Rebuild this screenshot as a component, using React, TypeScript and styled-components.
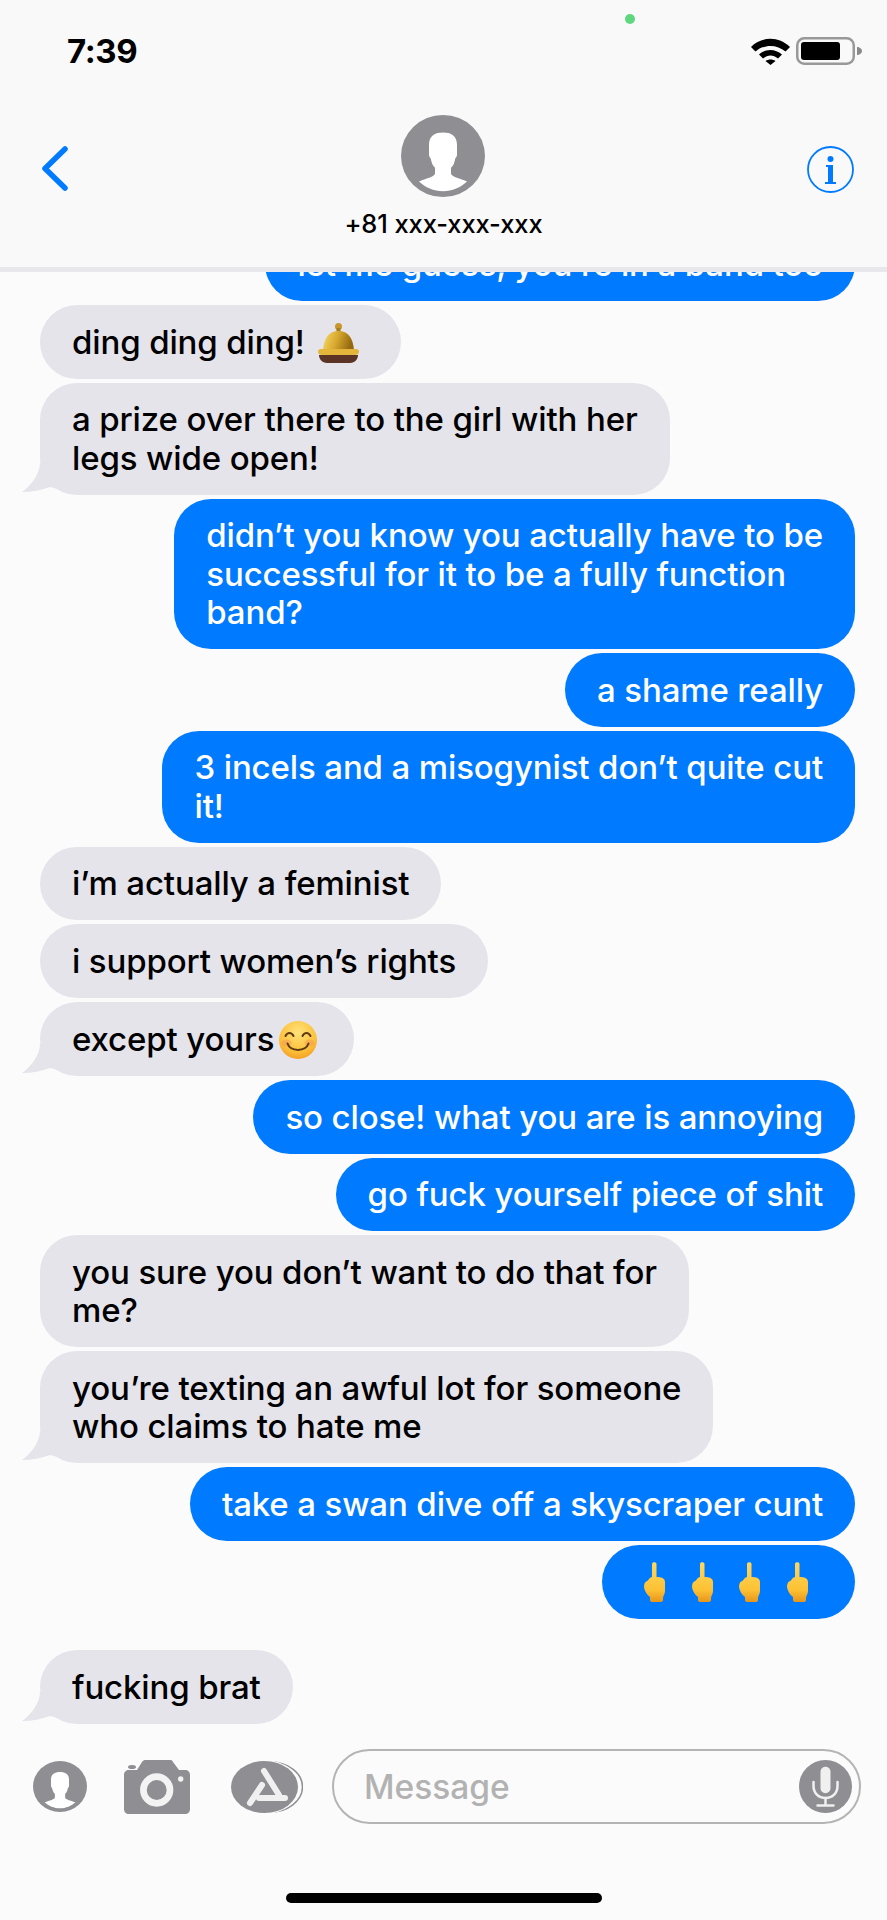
import React from "react";
import styled, { createGlobalStyle } from "styled-components";

const Global = createGlobalStyle`
  html, body { margin: 0; padding: 0; background: #fbfbfb; }
  * { box-sizing: border-box; }
`;

const Phone = styled.div`
  width: 887px;
  height: 1920px;
  background: #fbfbfb;
  display: flex;
  flex-direction: column;
  overflow: hidden;
  font-family: Inter, "Liberation Sans", sans-serif;
`;

const Header = styled.header`
  height: 272px;
  flex: none;
  background: #f9f9f9;
  border-bottom: 5px solid #e8e8ec;
  position: relative;
  z-index: 1;
  display: flex;
  flex-direction: column;
`;

const StatusBar = styled.div`
  height: 72px;
  padding: 0 25px 0 67px;
  display: flex;
  align-items: center;
  justify-content: space-between;
  position: relative;
`;

const Time = styled.span`
  font-size: 33px;
  font-weight: 700;
  color: #000;
  letter-spacing: -0.4px;
  line-height: 40px;
  margin-top: 30px;
`;

const StatusIcons = styled.div`
  display: flex;
  align-items: center;
  gap: 6px;
  margin-top: 30px;
`;

const GreenDot = styled.span`
  position: absolute;
  left: 625px;
  top: 14px;
  width: 10px;
  height: 10px;
  border-radius: 50%;
  background: #5fd77f;
`;

const NavBar = styled.div`
  flex: 1;
  display: grid;
  grid-template-columns: 1fr auto 1fr;
  align-items: start;
  padding: 0 33px;
`;

const Contact = styled.div`
  display: flex;
  flex-direction: column;
  align-items: center;
  margin-top: 43px;
  gap: 13px;
`;

const ContactName = styled.span`
  font-size: 25.5px;
  font-weight: 500;
  color: #000;
  line-height: 28px;
  letter-spacing: -0.1px;
`;

const BackIcon = styled.svg`
  margin: 74px 0 0 8px;
`;

const InfoIcon = styled.svg`
  margin-top: 74px;
  justify-self: end;
`;

const List = styled.main`
  flex: 1;
  min-height: 0;
  display: flex;
  flex-direction: column;
  justify-content: flex-end;
  align-items: flex-start;
  overflow: hidden;
  padding: 0 32px 11.5px 40px;
  gap: 4px;
`;

const Bubble = styled.div<{ $sent?: boolean; $gapTop?: boolean }>`
  position: relative;
  flex: none;
  max-width: 720px;
  align-self: ${(p) => (p.$sent ? "flex-end" : "flex-start")};
  background: ${(p) => (p.$sent ? "#007aff" : "#e5e4ea")};
  color: ${(p) => (p.$sent ? "#fff" : "#000")};
  border-radius: 37px;
  padding: 17.75px 32px;
  font-size: 33px;
  line-height: 38.25px;
  font-weight: 500;
  letter-spacing: -0.13px;
  white-space: pre-line;
  margin-top: ${(p) => (p.$gapTop ? "27px" : "0")};
`;

const Tail = styled.svg`
  position: absolute;
  left: -18px;
  bottom: 0;
`;

const BellEmoji = styled.svg`
  display: inline-block;
  vertical-align: middle;
  margin: -8px 10px -4px 13px;
`;

const SmileEmoji = styled.svg`
  display: inline-block;
  vertical-align: middle;
  margin: -8px 5px -4px 5px;
`;

const FingerRow = styled.div`
  display: flex;
  gap: 25.7px;
  height: 38.25px;
  align-items: center;
  padding: 0 14px 0 10px;
`;

const Composer = styled.footer`
  height: 185px;
  flex: none;
  display: flex;
  flex-direction: column;
  position: relative;
`;

const ComposerRow = styled.div`
  display: flex;
  align-items: center;
  padding: 14px 26px 0 33px;
`;

const Apps = styled.div`
  display: flex;
  align-items: center;
  gap: 37px;
  flex: none;
  margin-right: 29px;
`;

const StoreIcon = styled.svg`
  margin-left: 4px;
`;

const Field = styled.div`
  flex: 1;
  height: 75px;
  border: 2px solid #b4b4b4;
  border-radius: 38px;
  display: flex;
  align-items: center;
  justify-content: space-between;
  padding: 0 7px 0 30px;
`;

const Placeholder = styled.span`
  font-size: 33.5px;
  color: #b2b2b2;
  font-weight: 500;
  letter-spacing: 0;
`;

const HomeBar = styled.div`
  position: absolute;
  left: 286px;
  top: 158px;
  width: 316px;
  height: 10px;
  border-radius: 5px;
  background: #000;
`;

const GREY = "#8e8e93";
const BLUE = "#007aff";

const Person = ({ w, h }: { w: number; h: number }) => (
  <svg width={w} height={h} viewBox="0 0 84 84" preserveAspectRatio="none">
    <circle cx="42" cy="42" r="42" fill={GREY} />
    <path
      d="M42 18C34 18 28 21 28 31V41C28.500 44 30 44 30 46 31 50 32 52 34 54V60C34 63 26 65 18 68 24 74 33 78 42 78S60 74 66 68C58 65 50 63 50 60V54C52 52 53 50 54 46 54 44 55.500 44 56 41V31C56 21 50 18 42 18Z"
      fill="#fff"
    />
  </svg>
);

const TailShape = ({ color }: { color: string }) => (
  <Tail width="40" height="36" viewBox="0 0 40 36">
    <path d="M18 4C18 14 10 26 0 33 10 33 20 31 28 28L36 30 40 4Z" fill={color} />
  </Tail>
);

const Bell = () => (
  <BellEmoji width="41" height="40" viewBox="0 0 41 40">
    <defs>
      <linearGradient id="bell" x1="0" x2="1" y1="0" y2="0.2">
        <stop offset="0" stopColor="#f7dc6a" />
        <stop offset="0.5" stopColor="#d9a92f" />
        <stop offset="1" stopColor="#94690f" />
      </linearGradient>
    </defs>
    <circle cx="20.500" cy="3.500" r="3.500" fill="#c9962b" />
    <rect x="18.500" y="5" width="4" height="4" fill="#a67c1c" />
    <path d="M5 27C6 15 11 8 20.500 8S35 15 36 27z" fill="url(#bell)" />
    <path d="M0 28.500C0 26.500 2 26 4 26H37C39 26 41 26.500 41 28.500 41 31.500 38 32 35 32H6C3 32 0 31.500 0 28.500Z" fill="#e3b53a" />
    <path d="M1 32H40C40 36 37 40 32 40H9C4 40 1 36 1 32Z" fill="#5b3426" />
  </BellEmoji>
);

const Smile = () => (
  <SmileEmoji width="38" height="38" viewBox="0 0 38 38">
    <defs>
      <radialGradient id="smile" cx="0.5" cy="0.3" r="0.75">
        <stop offset="0" stopColor="#ffe27a" />
        <stop offset="0.65" stopColor="#fcc13c" />
        <stop offset="1" stopColor="#f39a20" />
      </radialGradient>
    </defs>
    <circle cx="19" cy="19" r="19" fill="url(#smile)" />
    <ellipse cx="7.500" cy="22" rx="5" ry="3.500" fill="#f59a50" opacity="0.55" />
    <ellipse cx="30.500" cy="22" rx="5" ry="3.500" fill="#f59a50" opacity="0.55" />
    <path d="M6.500 15C8.500 11 12.500 11 14.500 15M23.500 15C25.500 11 29.500 11 31.500 15" fill="none" stroke="#5d3a12" strokeWidth="2" strokeLinecap="round" />
    <path d="M8.500 22.500C11.500 31 26.500 31 29.500 22.500" fill="none" stroke="#5d3a12" strokeWidth="2" strokeLinecap="round" />
  </SmileEmoji>
);

const Finger = () => (
  <svg width="22" height="40" viewBox="0 0 22 40">
    <defs>
      <linearGradient id="hand" x1="0" x2="0" y1="0" y2="1">
        <stop offset="0" stopColor="#ffd860" />
        <stop offset="0.7" stopColor="#fcc133" />
        <stop offset="1" stopColor="#e8951a" />
      </linearGradient>
    </defs>
    <path
      d="M8 2C8-.5 12.500-.5 12.500 2V15C17 15 21 16 21 20V29C21 32 19 34 19 36V38C19 39 18 40 17 40H8C7 40 6 39 6 38V35C3 33 0 28 0 24 0 21 2 19 4 18.500 5 16.500 6 15.500 8 15Z"
      fill="url(#hand)"
    />
  </svg>
);

const Chevron = () => (
  <BackIcon width="27" height="45" viewBox="0 0 27 45" fill="none">
    <path d="M24 3L4 22.500 24 42" stroke={BLUE} strokeWidth="5.500" strokeLinecap="round" strokeLinejoin="round" />
  </BackIcon>
);

const Info = () => (
  <InfoIcon width="47" height="47" viewBox="0 0 47 47">
    <circle cx="23.500" cy="23.500" r="22.500" fill="none" stroke={BLUE} strokeWidth="1.800" />
    <circle cx="23.500" cy="13" r="3" fill={BLUE} />
    <path d="M19 19h7v17h3v2H18v-2h3V21h-2z" fill={BLUE} />
  </InfoIcon>
);

const Wifi = () => (
  <svg width="39" height="28" viewBox="0 0 39 28">
    <path d="M0 10C11-1 28-1 39 10l-4.500 4.500C26 7 13 7 4.500 14.500z" fill="#000" />
    <path d="M8 17.500c7-6 16-6 23 0l-4 4c-5-4-10-4-15 0z" fill="#000" />
    <path d="M14.500 24c3-2 7-2 10 0l-5 4z" fill="#000" />
  </svg>
);

const Battery = () => (
  <svg width="66" height="28" viewBox="0 0 66 28">
    <rect x="1.250" y="1.250" width="56.500" height="25.500" rx="7" fill="none" stroke="#999" strokeWidth="2.500" />
    <rect x="5" y="5" width="39" height="18" rx="3" fill="#000" />
    <path d="M61 10c2.500 0 5 2 5 4s-2.500 4-5 4z" fill="#8a8a8a" />
  </svg>
);

const Camera = () => (
  <svg width="66" height="54" viewBox="0 0 66 54">
    <path
      d="M13 10L18 2C19 .5 20 0 22 0H46C47.500 0 48.500 .5 49 2L55 10H61C64 10 66 12 66 15V49C66 52 64 54 61 54H5C2 54 0 52 0 49V15C0 12 2 10 5 10Z"
      fill={GREY}
    />
    <circle cx="32.700" cy="30" r="13.300" fill="none" stroke="#f3f3f3" strokeWidth="6.700" />
    <circle cx="56.700" cy="19" r="2.700" fill="#f3f3f3" />
    <ellipse cx="8" cy="7" rx="4" ry="2" fill={GREY} />
  </svg>
);

const AppStore = () => (
  <StoreIcon width="72" height="52" viewBox="0 0 72 52">
    <ellipse cx="38.500" cy="26" rx="33" ry="25.200" fill="none" stroke={GREY} strokeWidth="1.500" />
    <ellipse cx="34" cy="26" rx="34.800" ry="26.800" fill="#fbfbfb" />
    <ellipse cx="33.500" cy="26" rx="33.500" ry="26" fill={GREY} />
    <path d="M33 10L48 34M31 24L19 42M28 37H54" stroke="#f0f0f0" strokeWidth="6" strokeLinecap="round" fill="none" />
  </StoreIcon>
);

const Mic = () => (
  <svg width="53" height="53" viewBox="0 0 53 53">
    <circle cx="26.500" cy="26.500" r="26.500" fill={GREY} />
    <rect x="21.500" y="6.700" width="10" height="26.500" rx="5" fill="#f0f0f0" />
    <path d="M14.500 22V26C14.500 33 19.500 38 26.500 38S38.500 33 38.500 26V22" fill="none" stroke="#f0f0f0" strokeWidth="2.500" strokeLinecap="round" />
    <path d="M26.500 38V45M18.500 45.500H34.500" stroke="#f0f0f0" strokeWidth="2.500" strokeLinecap="round" />
  </svg>
);

type Msg = { text?: React.ReactNode; sent?: boolean; tail?: boolean; gapTop?: boolean };

const messages: Msg[] = [
  { text: "let me guess, you’re in a band too", sent: true },
  { text: <>ding ding ding!<Bell /></> },
  { text: "a prize over there to the girl with her\nlegs wide open!", tail: true },
  { text: "didn’t you know you actually have to be\nsuccessful for it to be a fully function\nband?", sent: true },
  { text: "a shame really", sent: true },
  { text: "3 incels and a misogynist don’t quite cut\nit!", sent: true },
  { text: "i’m actually a feminist" },
  { text: "i support women’s rights" },
  { text: <>except yours<Smile /></>, tail: true },
  { text: "so close! what you are is annoying", sent: true },
  { text: "go fuck yourself piece of shit", sent: true },
  { text: "you sure you don’t want to do that for\nme?" },
  { text: "you’re texting an awful lot for someone\nwho claims to hate me", tail: true },
  { text: "take a swan dive off a skyscraper cunt", sent: true },
  {
    text: (
      <FingerRow>
        <Finger />
        <Finger />
        <Finger />
        <Finger />
      </FingerRow>
    ),
    sent: true,
  },
  { text: "fucking brat", tail: true, gapTop: true },
];

export default function App() {
  return (
    <Phone>
      <Global />
      <Header>
        <StatusBar>
          <Time>7:39</Time>
          <GreenDot />
          <StatusIcons>
            <Wifi />
            <Battery />
          </StatusIcons>
        </StatusBar>
        <NavBar>
          <Chevron />
          <Contact>
            <Person w={84} h={82} />
            <ContactName>+81 xxx-xxx-xxx</ContactName>
          </Contact>
          <Info />
        </NavBar>
      </Header>
      <List>
        {messages.map((m, i) => (
          <Bubble key={i} $sent={m.sent} $gapTop={m.gapTop}>
            {m.text}
            {m.tail && <TailShape color="#e5e4ea" />}
          </Bubble>
        ))}
      </List>
      <Composer>
        <ComposerRow>
          <Apps>
            <Person w={54} h={51} />
            <Camera />
            <AppStore />
          </Apps>
          <Field>
            <Placeholder>Message</Placeholder>
            <Mic />
          </Field>
        </ComposerRow>
        <HomeBar />
      </Composer>
    </Phone>
  );
}
